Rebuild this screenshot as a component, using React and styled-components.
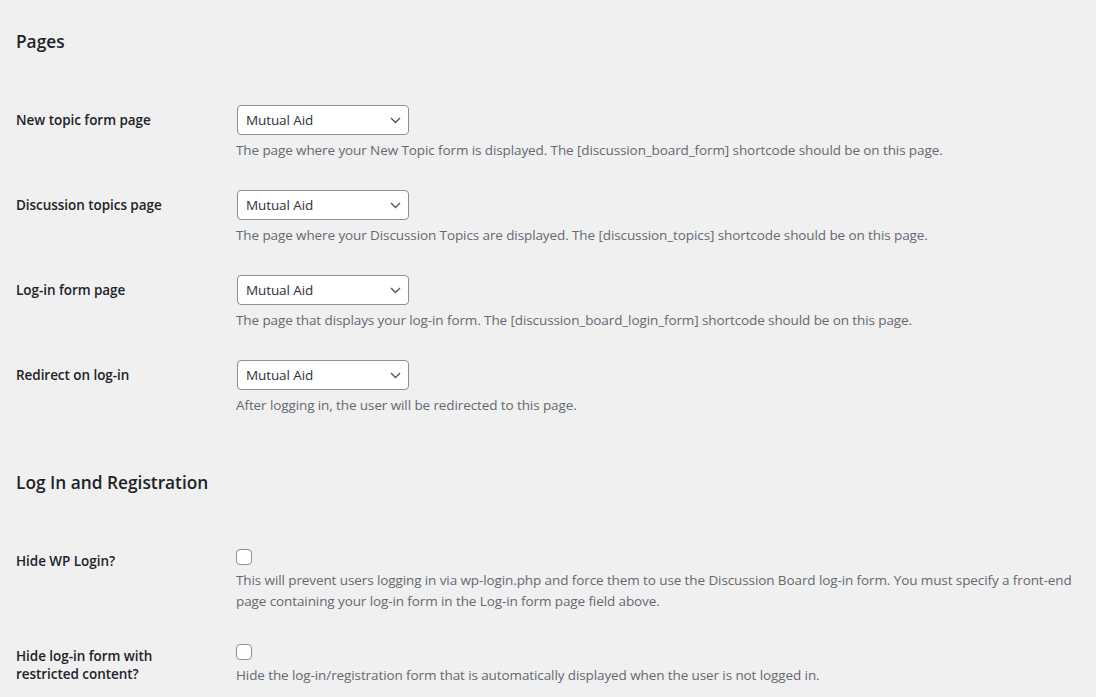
import React from 'react';
import styled, { createGlobalStyle } from 'styled-components';

const GlobalStyle = createGlobalStyle`
  body {
    margin: 0;
    background: #f0f0f1;
    color: #1d2327;
    font-family: "Open Sans", "Noto Sans", sans-serif;
  }
`;

const Page = styled.div`
  padding: 31px 10px 0 16px;
`;

const SectionTitle = styled.h2`
  margin: ${(p) => (p.$first ? '0' : '42px')} 0 37px;
  font-size: 17.3px;
  line-height: 22px;
  font-weight: 600;
`;

const FieldRow = styled.div`
  display: flex;
  align-items: flex-start;
`;

const FieldLabel = styled.label`
  flex: none;
  width: 200px;
  padding: 21px 10px 19px 0;
  font-size: 13.5px;
  letter-spacing: -0.05px;
  line-height: 18px;
  font-weight: 600;
`;

const FieldCell = styled.div`
  flex: 1;
  padding: 15px 10px 14px;
`;

const SelectWrap = styled.div`
  position: relative;
  width: 172px;
  margin: 0 1px;
`;

const Select = styled.select`
  display: block;
  width: 100%;
  height: 30px;
  padding: 0 24px 0 8px;
  border: 1px solid #8c8f94;
  border-radius: 4px;
  background: #fff;
  color: #2c3338;
  font: inherit;
  font-size: 13.5px;
  letter-spacing: -0.1px;
  appearance: none;
  outline: none;
`;

const Chevron = styled.svg`
  position: absolute;
  right: 8px;
  top: 12px;
  pointer-events: none;
`;

const Checkbox = styled.input`
  display: block;
  appearance: none;
  width: 16px;
  height: 16px;
  margin: 3px 0 0;
  border: 1px solid #8c8f94;
  border-radius: 4px;
  background: #fff;
`;

const Description = styled.p`
  margin: 5px 0 0;
  font-size: 13.5px;
  letter-spacing: -0.1px;
  line-height: 21px;
  color: #646970;
`;

const pageFields = [
  {
    label: 'New topic form page',
    text: 'The page where your New Topic form is displayed. The [discussion_board_form] shortcode should be on this page.',
  },
  {
    label: 'Discussion topics page',
    text: 'The page where your Discussion Topics are displayed. The [discussion_topics] shortcode should be on this page.',
  },
  {
    label: 'Log-in form page',
    text: 'The page that displays your log-in form. The [discussion_board_login_form] shortcode should be on this page.',
  },
  {
    label: 'Redirect on log-in',
    text: 'After logging in, the user will be redirected to this page.',
  },
];

const loginFields = [
  {
    label: 'Hide WP Login?',
    text: 'This will prevent users logging in via wp-login.php and force them to use the Discussion Board log-in form. You must specify a front-end page containing your log-in form in the Log-in form page field above.',
  },
  {
    label: 'Hide log-in form with restricted content?',
    text: 'Hide the log-in/registration form that is automatically displayed when the user is not logged in.',
  },
];

const PageSelect = () => (
  <SelectWrap>
    <Select defaultValue="mutual-aid">
      <option value="mutual-aid">Mutual Aid</option>
    </Select>
    <Chevron width="11" height="7" viewBox="0 0 11 7">
      <path d="M1 1l4.5 4.5L10 1" fill="none" stroke="#50575e" strokeWidth="1.4" />
    </Chevron>
  </SelectWrap>
);

const App = () => (
  <Page>
    <GlobalStyle />
    <SectionTitle $first>Pages</SectionTitle>
    {pageFields.map((f) => (
      <FieldRow key={f.label}>
        <FieldLabel>{f.label}</FieldLabel>
        <FieldCell>
          <PageSelect />
          <Description>{f.text}</Description>
        </FieldCell>
      </FieldRow>
    ))}

    <SectionTitle>Log In and Registration</SectionTitle>
    {loginFields.map((f) => (
      <FieldRow key={f.label}>
        <FieldLabel>{f.label}</FieldLabel>
        <FieldCell>
          <Checkbox type="checkbox" />
          <Description>{f.text}</Description>
        </FieldCell>
      </FieldRow>
    ))}
  </Page>
);

export default App;
